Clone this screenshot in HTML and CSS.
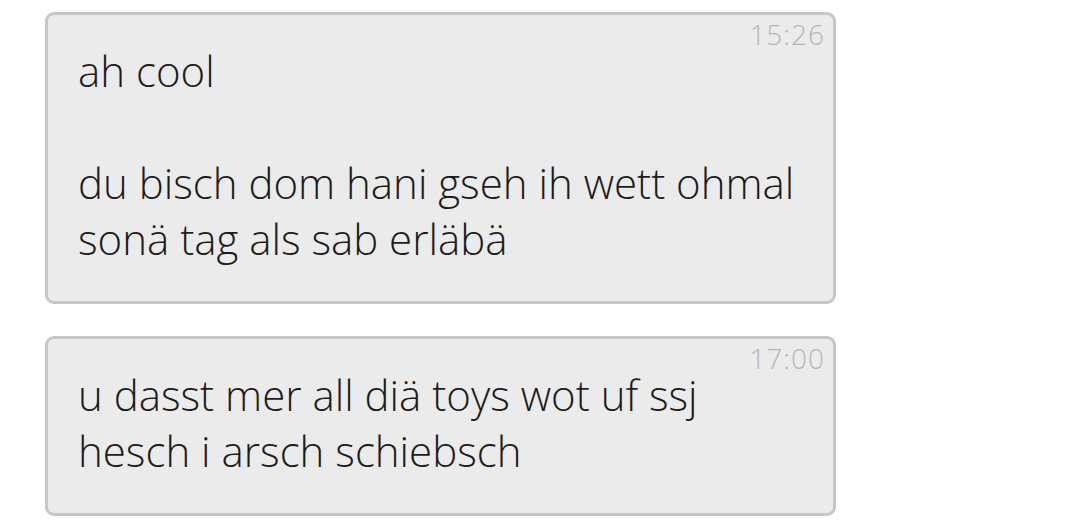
FILE: index.html
```html
<!DOCTYPE html>
<html>
<head>
<meta charset="utf-8">
<link rel="stylesheet" href="styles.css">
</head>
<body>
<div class="chat">
  <div class="bubble">
    <div class="time">15:26</div>
    <div class="text">ah cool<br><br>du bisch dom hani gseh ih wett ohmal<br>sonä tag als sab erläbä</div>
  </div>
  <div class="bubble">
    <div class="time">17:00</div>
    <div class="text">u dasst mer all diä toys wot uf ssj<br>hesch i arsch schiebsch</div>
  </div>
</div>
</body>
</html>
```
FILE: styles.css
```css
html, body {
  margin: 0;
  padding: 0;
  background: #ffffff;
}
body {
  font-family: "Open Sans", "Noto Sans", sans-serif;
}
.chat {
  display: flex;
  flex-direction: column;
  gap: 32px;
  padding: 12px 0 0 45px;
}
.bubble {
  box-sizing: border-box;
  width: 791px;
  background: #ebebeb;
  border: 3px solid #c6c6c6;
  border-radius: 9px;
  padding: 4px 8px 34px 30px;
}
.time {
  font-size: 28px;
  line-height: 30px;
  margin-bottom: -6px;
  font-weight: 300;
  letter-spacing: 1px;
  color: #b5b5b5;
  text-align: right;
}
.text {
  font-size: 42px;
  line-height: 56px;
  font-weight: 300;
  color: #1c1c1c;
}
```
